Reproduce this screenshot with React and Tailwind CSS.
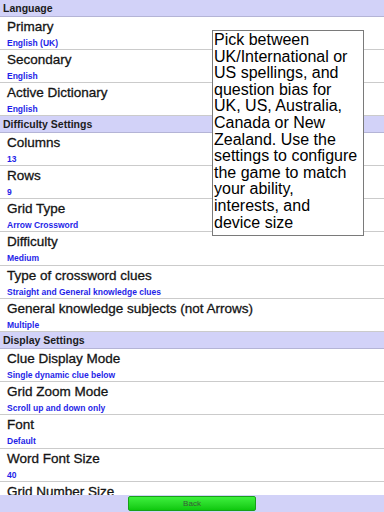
const sections = [
  {
    title: "Language",
    rows: [
      ["Primary", "English (UK)"],
      ["Secondary", "English"],
      ["Active Dictionary", "English"],
    ],
  },
  {
    title: "Difficulty Settings",
    rows: [
      ["Columns", "13"],
      ["Rows", "9"],
      ["Grid Type", "Arrow Crossword"],
      ["Difficulty", "Medium", true],
      ["Type of crossword clues", "Straight and General knowledge clues"],
      ["General knowledge subjects (not Arrows)", "Multiple"],
    ],
  },
  {
    title: "Display Settings",
    rows: [
      ["Clue Display Mode", "Single dynamic clue below"],
      ["Grid Zoom Mode", "Scroll up and down only"],
      ["Font", "Default", true],
      ["Word Font Size", "40"],
      ["Grid Number Size", "Medium"],
    ],
  },
];

const tipLines = [
  "Pick between",
  "UK/International or",
  "US spellings, and",
  "question bias for",
  "UK, US, Australia,",
  "Canada or New",
  "Zealand. Use the",
  "settings to configure",
  "the game to match",
  "your ability,",
  "interests, and",
  "device size",
];

const SettingRow = ({ label, value, tall }) => (
  <div
    className={
      tall
        ? "h-[34px] shrink-0 border-b border-[#cbcbcb] bg-white pl-[7px]"
        : "h-[33px] shrink-0 border-b border-[#cbcbcb] bg-white pl-[7px]"
    }
  >
    <div className="pt-[1.5px] text-[13.5px] leading-[15px] text-[#141414] [-webkit-text-stroke:0.3px_#141414]">
      {label}
    </div>
    <div className="mt-[4px] text-[8.5px] font-bold leading-[10px] text-[#1f1fe8]">{value}</div>
  </div>
);

export default function App() {
  return (
    <div
      className="relative flex h-[512px] w-[384px] flex-col overflow-hidden bg-white"
      style={{ fontFamily: '"Liberation Sans", Arial, sans-serif' }}
    >
      <div className="flex-1 overflow-hidden">
        {sections.map((s) => (
          <div key={s.title}>
            <div className="h-[17px] border-b border-[#b4b4d6] bg-[#d2d2f8] pl-[3px] text-[10.5px] font-bold leading-[16px] text-[#1c1c1c]">
              {s.title}
            </div>
            {s.rows.map(([label, value, tall]) => (
              <SettingRow key={label} label={label} value={value} tall={tall} />
            ))}
          </div>
        ))}
      </div>

      <div className="flex h-[17px] shrink-0 items-center justify-center bg-[#d2d2f8]">
        <button className="h-[15px] w-[128px] rounded-[2px] border border-[#18a018] bg-gradient-to-b from-[#3cf03c] to-[#0cc80c] text-[8px] leading-[13px] text-[#3a5a3a]">
          Back
        </button>
      </div>

      <div className="absolute left-[212px] top-[30px] h-[206px] w-[152px] border border-[#7a7a7a] bg-white pl-[1px] pt-[1px] text-[16px] leading-[16.6px] whitespace-nowrap text-black">
        {tipLines.map((l) => (
          <div key={l}>{l}</div>
        ))}
      </div>
    </div>
  );
}
